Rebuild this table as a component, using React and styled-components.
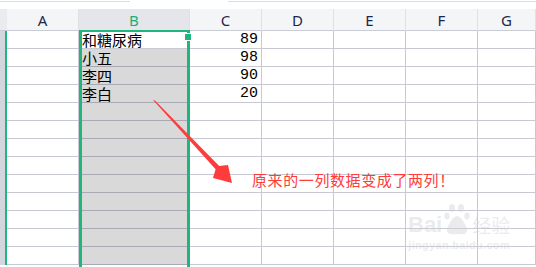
import React from "react";
import styled, { createGlobalStyle } from "styled-components";

const GlobalStyle = createGlobalStyle`
  html, body { margin: 0; padding: 0; background: #fff; }
  body { font-family: "Noto Sans", "Noto Sans CJK SC", sans-serif; overflow: hidden; }
`;

const COLS = ["A", "B", "C", "D", "E", "F", "G"];
const ROW_COUNT = 13;
const data = [
  ["和糖尿病", 89],
  ["小五", 98],
  ["李四", 90],
  ["李白", 20],
];

const Sheet = styled.div`
  position: relative;
  width: 536px;
  height: 267px;
  overflow: hidden;
  background: #fff;
`;

const TopStrip = styled.div`
  height: 9px;
  display: flex;
  gap: 98px;
  padding-top: 1px;
  box-sizing: border-box;
`;

const StripEdge = styled.div`
  height: 1px;
  flex: ${({ $grow }) => ($grow ? 1 : "0 0 130px")};
  background: #dcdde1;
`;

const Grid = styled.div`
  display: grid;
  grid-template-columns: 7px 72px 111px 72px 72px 72px 72px 1fr;
  grid-auto-rows: 18px;
  grid-template-rows: 22px;
`;

const Corner = styled.div`
  background: #e9ebef;
  border-bottom: 1px solid #c9ccd4;
`;

const ColHead = styled.div`
  display: flex;
  align-items: center;
  justify-content: center;
  background: ${({ $active }) => ($active ? "#e4e6eb" : "#f4f5f7")};
  border-right: 1px solid #dfe1e6;
  border-bottom: 1px solid ${({ $active }) => ($active ? "#1fb57c" : "#c9ccd4")};
  color: ${({ $active }) => ($active ? "#1cae78" : "#1d2650")};
  font-size: 15px;
  padding-top: 1px;
  box-sizing: border-box;
`;

const RowHead = styled.div`
  background: #d2d6de;
  border-right: 2px solid #1fb57c;
`;

const Cell = styled.div`
  box-sizing: border-box;
  border-right: 1px solid #c6c9d1;
  border-bottom: 1px solid ${({ $sel }) => ($sel ? "#a7aab2" : "#c6c9d1")};
  background: ${({ $sel }) => ($sel ? "#d9d9d9" : "#fff")};
  font-family: "Noto Sans CJK SC", "Noto Sans", sans-serif;
  font-size: 15px;
  line-height: 17px;
  color: #000;
  padding: 0 3px;
  white-space: nowrap;
  text-align: ${({ $num }) => ($num ? "right" : "left")};
`;

const NumCell = styled(Cell)`
  font-family: "Liberation Mono", monospace;
  font-size: 15px;
  padding-right: 3px;
`;

const Selection = styled.div`
  position: absolute;
  left: 79px;
  top: 30px;
  width: 111px;
  height: 240px;
  box-sizing: border-box;
  border: 2px solid #1fb57c;
  border-left-width: 3px;
  border-right-width: 3px;
  pointer-events: none;
`;

const FillHandle = styled.div`
  position: absolute;
  right: -5px;
  top: 1px;
  width: 6px;
  height: 6px;
  background: #1fb57c;
  border: 1px solid #fff;
`;

const Overlay = styled.svg`
  position: absolute;
  left: 0;
  top: 0;
  pointer-events: none;
`;

const Note = styled.div`
  position: absolute;
  left: 252px;
  top: 169px;
  color: #ff3b3b;
  font-family: "Noto Sans CJK SC", sans-serif;
  font-size: 15px;
  letter-spacing: 0.6px;
  white-space: nowrap;
`;

const Watermark = styled.div`
  position: absolute;
  left: 408px;
  top: 203px;
  display: flex;
  flex-direction: column;
  align-items: center;
  color: rgba(210, 210, 214, 0.45);
  pointer-events: none;
`;

const MarkRow = styled.div`
  display: flex;
  align-items: flex-end;
  gap: 2px;
  font-family: "Liberation Sans", sans-serif;
  font-weight: bold;
  font-size: 22px;
  line-height: 24px;
`;

const MarkCjk = styled.span`
  font-family: "Noto Sans CJK SC", sans-serif;
  font-size: 19px;
  font-weight: normal;
`;

const MarkUrl = styled.div`
  font-family: "Liberation Sans", sans-serif;
  font-weight: bold;
  font-size: 11px;
  letter-spacing: 0.3px;
  margin-top: 2px;
`;

const Paw = () => (
  <svg width="26" height="34" viewBox="0 0 26 34" fill="rgba(210,210,214,0.45)">
    <ellipse cx="8" cy="5" rx="3" ry="4" />
    <ellipse cx="17" cy="5" rx="3" ry="4" />
    <ellipse cx="3" cy="13" rx="2.6" ry="3.4" />
    <ellipse cx="23" cy="13" rx="2.6" ry="3.4" />
    <path d="M13 13c-4 0-9 9-10 13-1 5 4 6 10 5 6 1 11 0 10-5-1-4-6-13-10-13z" />
  </svg>
);

export default function App() {
  const rows = Array.from({ length: ROW_COUNT }, (_, i) => data[i] || ["", ""]);
  return (
    <>
      <GlobalStyle />
      <Sheet>
        <TopStrip>
          <StripEdge />
          <StripEdge $grow />
        </TopStrip>
        <Grid>
          <Corner />
          {COLS.map((c) => (
            <ColHead key={c} $active={c === "B"}>
              {c}
            </ColHead>
          ))}
          {rows.map(([name, score], r) => (
            <React.Fragment key={r}>
              <RowHead />
              <Cell />
              <Cell $sel={r > 0}>{name}</Cell>
              <NumCell $num>{score}</NumCell>
              <Cell />
              <Cell />
              <Cell />
              <Cell />
            </React.Fragment>
          ))}
        </Grid>
        <Selection>
          <FillHandle />
        </Selection>
        <Overlay width="536" height="267">
          <polygon
            fill="#ff3c3c"
            points="153,100 155,100.5 219.2,165.9 228,165 232,183 213,178 215.6,169.3"
          />
        </Overlay>
        <Note>原来的一列数据变成了两列！</Note>
        <Watermark>
          <MarkRow>
            <span>Bai</span>
            <Paw />
            <MarkCjk>经验</MarkCjk>
          </MarkRow>
          <MarkUrl>jingyan.baidu.com</MarkUrl>
        </Watermark>
      </Sheet>
    </>
  );
}
